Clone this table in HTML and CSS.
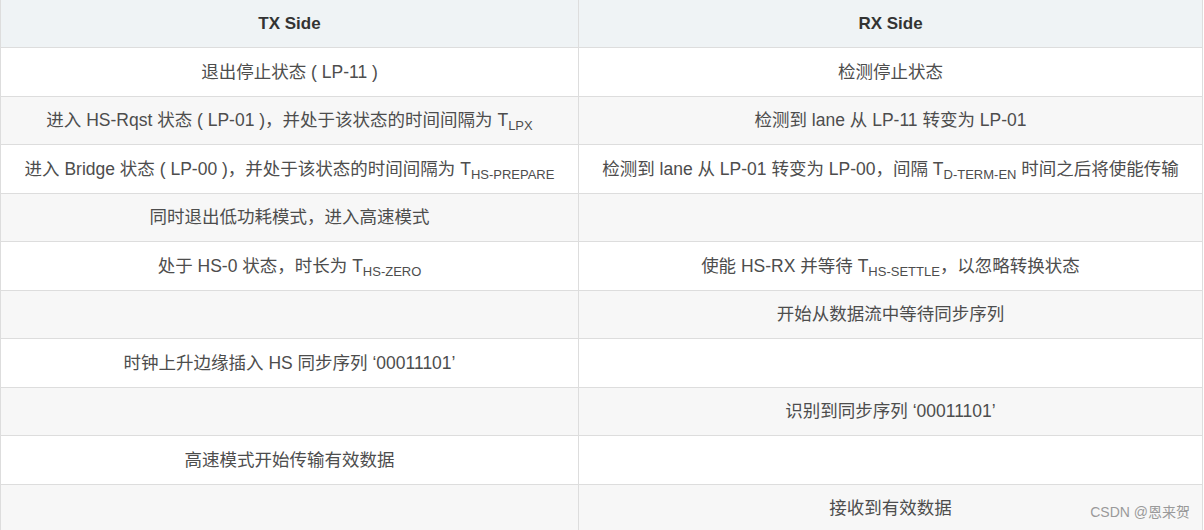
FILE: index.html
```html
<!DOCTYPE html>
<html lang="zh">
<head>
<meta charset="utf-8">
<link rel="stylesheet" href="styles.css">
</head>
<body>
<div class="wrap">
<table class="tbl">
<colgroup><col class="c1"><col class="c2"></colgroup>
<thead>
<tr><th>TX Side</th><th>RX Side</th></tr>
</thead>
<tbody>
<tr><td>退出停止状态 ( LP-11 )</td><td>检测停止状态</td></tr>
<tr><td>进入 HS-Rqst 状态 ( LP-01 )，并处于该状态的时间间隔为 T<sub>LPX</sub></td><td>检测到 lane 从 LP-11 转变为 LP-01</td></tr>
<tr><td>进入 Bridge 状态 ( LP-00 )，并处于该状态的时间间隔为 T<sub>HS-PREPARE</sub></td><td>检测到 lane 从 LP-01 转变为 LP-00，间隔 T<sub>D-TERM-EN</sub> 时间之后将使能传输</td></tr>
<tr><td>同时退出低功耗模式，进入高速模式</td><td></td></tr>
<tr><td>处于 HS-0 状态，时长为 T<sub>HS-ZERO</sub></td><td>使能 HS-RX 并等待 T<sub>HS-SETTLE</sub>，以忽略转换状态</td></tr>
<tr><td></td><td>开始从数据流中等待同步序列</td></tr>
<tr><td>时钟上升边缘插入 HS 同步序列 ‘00011101’</td><td></td></tr>
<tr><td></td><td>识别到同步序列 ‘00011101’</td></tr>
<tr><td>高速模式开始传输有效数据</td><td></td></tr>
<tr><td></td><td>接收到有效数据</td></tr>
</tbody>
</table>
<div class="mark">CSDN @恩来贺</div>
</div>
</body>
</html>
```
FILE: styles.css
```css
html, body {
  margin: 0;
  padding: 0;
  background: #ffffff;
}
.wrap {
  position: relative;
  width: 1204px;
  height: 530px;
  overflow: hidden;
}
.tbl {
  border-collapse: collapse;
  width: 1202px;
  table-layout: fixed;
  font-family: "Liberation Sans", Arial, "Noto Sans CJK SC", sans-serif;
  font-size: 17.5px;
  color: #4d4d4d;
  margin-top: -1px;
}
.c1 { width: 578px; }
.c2 { width: 624px; }
.tbl th, .tbl td {
  border: 1px solid #dddddd;
  text-align: center;
  padding: 0 4px;
  line-height: 24px;
  white-space: nowrap;
}
.tbl th {
  background: #eff3f5;
  color: #333333;
  font-weight: bold;
  font-size: 17px;
  height: 47px;
}
.tbl td {
  height: 47.5px;
}
.tbl tbody tr:nth-child(even) td {
  background: #f7f7f7;
}
.tbl sub {
  font-size: 13px;
  vertical-align: -4px;
  line-height: 0;
}
.mark {
  position: absolute;
  right: 14px;
  bottom: 9px;
  font-family: "Liberation Sans", Arial, "Noto Sans CJK SC", sans-serif;
  font-size: 14px;
  color: #9a9a9a;
}
```
